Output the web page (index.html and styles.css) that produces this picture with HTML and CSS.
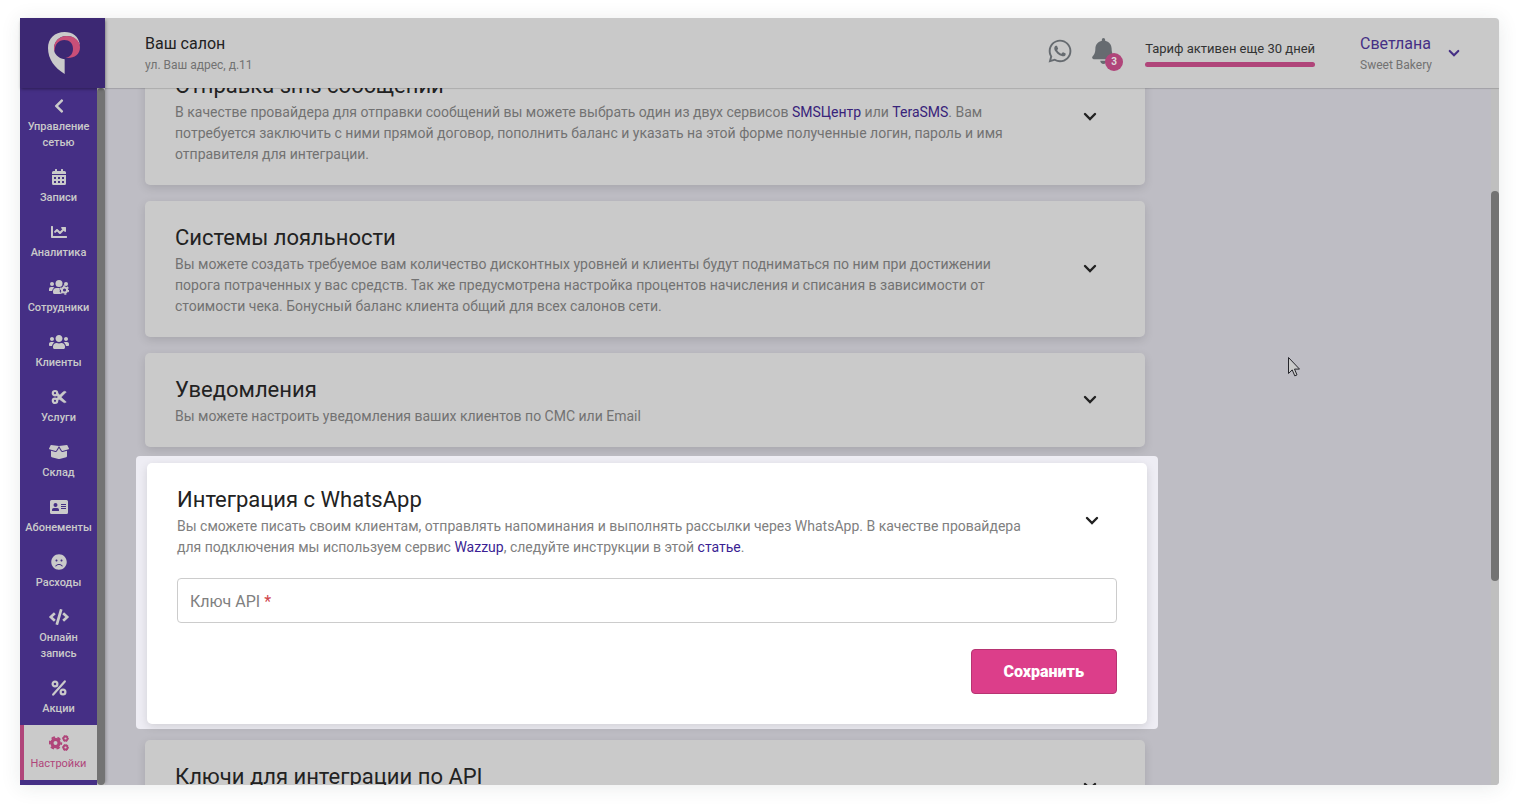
FILE: index.html
```html
<!DOCTYPE html>
<html lang="ru">
  <head>
    <title>Настройки</title>
    <meta charset="utf-8">
    <meta name="viewport" content="width=device-width, initial-scale=1">
    <link rel="stylesheet" href="styles.css">
  </head>
  <body>
    <svg class="sprite" aria-hidden="true">
      <symbol id="chevron-down" viewBox="0 0 14 10">
        <path d="M2 2l5 5 5-5" fill="none" stroke="currentColor" stroke-width="2.400" stroke-linecap="round" />
      </symbol>
    </svg>

    <div class="app">
      <aside class="sidebar">
        <a class="logo" href="#" aria-label="Главная">
          <svg width="32" height="42" viewBox="0 0 96 126">
            <path fill="#cacaca" d="M50 126C20 108 0 82 0 48 0 20 20 0 50 0c24 0 42 12 46 40-8-18-22-28-40-28-24 0-38 18-38 38 0 16 12 28 32 32z" />
            <path fill="#c94f78" d="M18 54c-2-26 16-42 38-42 24 0 40 14 40 34 0 22-18 34-43 32 15-4 22-14 22-28 0-16-11-26-26-26-17 0-29 12-29 34z" />
          </svg>
        </a>
        <div class="menu">
          <nav class="nav">
            <a class="nav-item" href="#">
              <svg width="10" height="16" viewBox="0 0 320 512"><path d="M34.52 239.03L228.87 44.69c9.37-9.37 24.57-9.37 33.94 0l22.67 22.67c9.36 9.36 9.37 24.52.04 33.9L131.49 256l154.02 154.75c9.34 9.38 9.32 24.54-.04 33.9l-22.67 22.67c-9.37 9.37-24.57 9.37-33.94 0L34.52 272.97c-9.37-9.37-9.37-24.57 0-33.94z" /></svg>
              Управление сетью
            </a>
            <a class="nav-item" href="#">
              <svg width="14" height="16" viewBox="0 0 14 16"><path fill-rule="evenodd" d="M1.500 2H3V.5a.5.5 0 0 1 .5-.5h1a.5.5 0 0 1 .5.5V2h4V.5a.5.5 0 0 1 .5-.5h1a.5.5 0 0 1 .5.5V2h1.500A1.500 1.500 0 0 1 14 3.500V5H0V3.500A1.500 1.500 0 0 1 1.500 2zM0 6h14v8.500a1.500 1.500 0 0 1-1.500 1.500h-11A1.500 1.500 0 0 1 0 14.500zM2 8v2h2V8zm4 0v2h2V8zm4 0v2h2V8zM2 12v2h2v-2zm4 0v2h2v-2zm4 0v2h2v-2z" /></svg>
              Записи
            </a>
            <a class="nav-item" href="#">
              <svg width="16" height="16" viewBox="0 0 512 512"><path d="M496 384H64V80c0-8.84-7.16-16-16-16H16C7.16 64 0 71.16 0 80v336c0 17.67 14.33 32 32 32h464c8.84 0 16-7.16 16-16v-32c0-8.840-7.160-16-16-16zM464 96H345.940c-21.380 0-32.090 25.850-16.970 40.970l32.400 32.400L288 242.750l-73.370-73.370c-12.500-12.500-32.760-12.500-45.250 0l-68.690 68.690c-6.250 6.250-6.250 16.380 0 22.630l22.620 22.620c6.250 6.250 16.380 6.250 22.630 0L192 237.250l73.370 73.370c12.500 12.500 32.760 12.500 45.250 0l96-96 32.400 32.400c15.120 15.120 40.970 4.410 40.970-16.970V112c.01-8.840-7.150-16-15.990-16z" /></svg>
              Аналитика
            </a>
            <a class="nav-item" href="#">
              <svg width="20" height="16" viewBox="0 0 20 16">
                <circle cx="3" cy="5" r="2" /><circle cx="10" cy="4.500" r="3.500" /><circle cx="17" cy="5" r="2" />
                <path d="M0 12v-2a2 2 0 0 1 2-2h2q.8 0 1.400.6Q3.500 9.800 3.100 12zM4 13.500v-1A3.500 3.500 0 0 1 7.500 9h3.400q-.9 1 .1 2.200-1 .9.2 2.400.3 1 1.300 1.400H5.500A1.500 1.500 0 0 1 4 13.500z" />
                <circle cx="15.500" cy="11" r="2.600" fill="none" stroke="currentColor" stroke-width="2" />
                <circle cx="15.500" cy="11" r="4" fill="none" stroke="currentColor" stroke-width="1.400" stroke-dasharray="2.100 2.089" />
              </svg>
              Сотрудники
            </a>
            <a class="nav-item" href="#">
              <svg width="20" height="16" viewBox="0 0 640 512"><path d="M96 224c35.300 0 64-28.700 64-64s-28.700-64-64-64-64 28.700-64 64 28.700 64 64 64zm448 0c35.300 0 64-28.700 64-64s-28.700-64-64-64-64 28.700-64 64 28.700 64 64 64zm32 32h-64c-17.600 0-33.500 7.100-45.100 18.600 40.300 22.100 68.900 62 75.100 109.400h66c17.700 0 32-14.300 32-32v-32c0-35.300-28.700-64-64-64zm-256 0c61.900 0 112-50.100 112-112S381.900 32 320 32 208 82.100 208 144s50.100 112 112 112zm76.800 32h-8.300c-20.800 10-43.900 16-68.500 16s-47.600-6-68.500-16h-8.300C179.600 288 128 339.600 128 403.200V432c0 26.500 21.500 48 48 48h288c26.500 0 48-21.500 48-48v-28.800c0-63.600-51.600-115.200-115.200-115.200zm-223.700-13.400C161.500 263.100 145.600 256 128 256H64c-35.300 0-64 28.700-64 64v32c0 17.700 14.300 32 32 32h65.900c6.300-47.400 34.900-87.300 75.200-109.400z" /></svg>
              Клиенты
            </a>
            <a class="nav-item" href="#">
              <svg width="16" height="16" viewBox="0 0 16 16">
                <g fill="none" stroke="currentColor" stroke-width="2.200"><circle cx="4" cy="4.200" r="2.200" /><circle cx="4" cy="11.800" r="2.200" /></g>
                <path d="M5 5.500l2.200-.9 1.600 1.300L12 3q1.600-1.500 3.300 0L6.800 11.600 4.800 10.500 7 8zM9.600 7.800l5.700 5.200q-1.700 1.500-3.300 0L7.600 9.800z" stroke="currentColor" stroke-width=".5" />
              </svg>
              Услуги
            </a>
            <a class="nav-item" href="#">
              <svg width="20" height="16" viewBox="0 0 640 512"><path d="M425.700 256c-16.900 0-32.800-9-41.400-23.400L320 126l-64.200 106.600c-8.700 14.500-24.600 23.500-41.500 23.500-4.500 0-9-.6-13.300-1.900L64 215v178c0 14.700 10 27.500 24.200 31l216.200 54.100c10.200 2.500 20.900 2.500 31 0L551.800 424c14.200-3.600 24.200-16.400 24.200-31V215l-137 39.100c-4.300 1.300-8.800 1.900-13.300 1.900zm212.600-112.200L586.800 41c-3.100-6.200-9.800-9.800-16.700-8.900L320 64l91.700 152.100c3.800 6.300 11.400 9.300 18.500 7.300l197.900-56.500c9.900-2.900 14.700-13.900 10.200-23.100zM53.200 41L1.700 143.800c-4.600 9.200.3 20.200 10.100 23l197.900 56.500c7.100 2 14.700-1 18.500-7.300L320 64 69.800 32.100c-6.900-.8-13.500 2.700-16.600 8.900z" /></svg>
              Склад
            </a>
            <a class="nav-item" href="#">
              <svg width="18" height="16" viewBox="0 0 18 16"><path fill-rule="evenodd" d="M1.500 1h15A1.500 1.500 0 0 1 18 2.500v11a1.500 1.500 0 0 1-1.500 1.500h-15A1.500 1.500 0 0 1 0 13.500v-11A1.500 1.500 0 0 1 1.500 1zM5.500 4a2 2 0 1 0 0 4 2 2 0 0 0 0-4zM2 11.500q0 .5.500.5h6q.5 0 .5-.5v-.7Q9 9 7.200 9H3.800Q2 9 2 10.800zM11 5v1h5V5zm0 2v1h5V7zm0 2v1h5V9z" /></svg>
              Абонементы
            </a>
            <a class="nav-item" href="#">
              <svg width="16" height="16" viewBox="0 0 496 512"><path d="M248 8C111 8 0 119 0 256s111 248 248 248 248-111 248-248S385 8 248 8zm80 168c17.700 0 32 14.300 32 32s-14.300 32-32 32-32-14.300-32-32 14.300-32 32-32zm-160 0c17.700 0 32 14.300 32 32s-14.300 32-32 32-32-14.300-32-32 14.300-32 32-32zm170.200 218.200C315.800 367.400 282.900 352 248 352s-67.800 15.400-90.200 42.200c-13.500 16.300-38.100-4.200-24.600-20.500C161.700 339.600 203.600 320 248 320s86.300 19.600 114.700 53.800c13.600 16.200-11 36.700-24.500 20.400z" /></svg>
              Расходы
            </a>
            <a class="nav-item" href="#">
              <svg width="20" height="16" viewBox="0 0 640 512"><path d="M278.900 511.500l-61-17.700c-6.400-1.800-10-8.500-8.200-14.900L346.200 8.700c1.800-6.400 8.500-10 14.900-8.200l61 17.700c6.400 1.800 10 8.500 8.200 14.900L293.800 503.300c-1.900 6.400-8.500 10.100-14.900 8.200zm-114-112.200l43.500-46.400c4.600-4.900 4.300-12.700-.8-17.200L117 256l90.600-79.700c5.100-4.500 5.500-12.300.8-17.200l-43.500-46.400c-4.500-4.800-12.100-5.100-17-.5L3.800 247.200c-5.100 4.700-5.100 12.800 0 17.500l144.100 135.100c4.900 4.600 12.500 4.400 17-.5zm327.200.6l144.100-135.100c5.100-4.700 5.100-12.800 0-17.500L492.100 112.100c-4.800-4.500-12.400-4.300-17 .5L431.600 159c-4.600 4.900-4.300 12.700.8 17.200L523 256l-90.600 79.700c-5.100 4.500-5.500 12.300-.8 17.200l43.500 46.400c4.500 4.900 12.100 5.100 17 .6z" /></svg>
              Онлайн запись
            </a>
            <a class="nav-item" href="#">
              <svg width="16" height="16" viewBox="0 0 16 16"><g fill="none" stroke="currentColor" stroke-width="2.200"><circle cx="4" cy="4" r="2.400" /><circle cx="12" cy="12" r="2.400" /><path d="M13.800 1.400L2.200 14.600" stroke-linecap="round" /></g></svg>
              Акции
            </a>
            <a class="nav-item active" href="#">
              <svg width="20" height="16" viewBox="0 0 20 16">
                <g fill="none" stroke="currentColor">
                  <circle cx="6.500" cy="8" r="3.600" stroke-width="3.200" />
                  <circle cx="6.500" cy="8" r="5.700" stroke-width="2" stroke-dasharray="3.400 2.569" stroke-dashoffset="1.700" />
                  <circle cx="16.500" cy="3.500" r="2" stroke-width="1.800" />
                  <circle cx="16.500" cy="3.500" r="3" stroke-width="1" stroke-dasharray="2 1.142" stroke-dashoffset="1" />
                  <circle cx="16.500" cy="12.500" r="2" stroke-width="1.800" />
                  <circle cx="16.500" cy="12.500" r="3" stroke-width="1" stroke-dasharray="2 1.142" stroke-dashoffset="1" />
                </g>
              </svg>
              Настройки
            </a>
          </nav>
          <div class="scrollbar"><div class="thumb thumb-menu"></div></div>
        </div>
      </aside>

      <div class="main">
        <header class="topbar">
          <div class="salon">
            <div class="name">Ваш салон</div>
            <div class="sub">ул. Ваш адрес, д.11</div>
          </div>
          <a class="whatsapp" href="#" aria-label="WhatsApp">
            <svg width="24" height="26" viewBox="0 0 448 512"><path d="M380.900 97.100C339 55.100 283.200 32 223.900 32c-122.400 0-222 99.600-222 222 0 39.100 10.200 77.300 29.600 111L0 480l117.700-30.900c32.400 17.700 68.900 27 106.100 27h.1c122.300 0 224.100-99.600 224.100-222 0-59.300-25.200-115-67.100-157zm-157 341.600c-33.200 0-65.700-8.900-94-25.700l-6.700-4-69.800 18.300L72 359.200l-4.400-7c-18.500-29.400-28.200-63.300-28.200-98.200 0-101.700 82.800-184.500 184.600-184.500 49.300 0 95.600 19.200 130.400 54.100 34.800 34.900 56.200 81.200 56.100 130.500 0 101.800-84.900 184.600-186.600 184.600zm101.200-138.200c-5.500-2.800-32.800-16.200-37.900-18-5.100-1.900-8.800-2.800-12.500 2.800-3.700 5.600-14.300 18-17.600 21.800-3.200 3.700-6.500 4.200-12 1.400-32.600-16.300-54-29.100-75.500-66-5.700-9.800 5.700-9.100 16.300-30.300 1.800-3.700.9-6.900-.5-9.700-1.400-2.800-12.500-30.100-17.100-41.200-4.500-10.800-9.100-9.300-12.500-9.500-3.200-.2-6.900-.2-10.600-.2-3.700 0-9.700 1.400-14.800 6.900-5.100 5.600-19.400 19-19.400 46.300 0 27.300 19.900 53.700 22.600 57.400 2.800 3.700 39.100 59.700 94.800 83.800 35.200 15.200 49 16.500 66.600 13.900 10.700-1.600 32.800-13.400 37.400-26.400 4.600-13 4.600-24.100 3.200-26.400-1.300-2.500-5-3.900-10.500-6.600z" /></svg>
          </a>
          <button class="bell" type="button" aria-label="Уведомления">
            <svg width="23" height="26" viewBox="0 0 448 512"><path d="M224 512c35.320 0 63.970-28.650 63.970-64H160.030c0 35.350 28.650 64 63.970 64zm215.390-149.710c-19.320-20.760-55.470-51.990-55.470-154.290 0-77.700-54.480-139.900-127.940-155.160V32c0-17.670-14.320-32-31.980-32s-31.980 14.330-31.980 32v20.840C118.560 68.100 64.080 130.300 64.080 208c0 102.300-36.150 133.530-55.470 154.290-6 6.450-8.660 14.160-8.610 21.710.11 16.400 12.980 32 32.100 32h383.800c19.120 0 32-15.600 32.100-32 .05-7.550-2.610-15.270-8.610-21.710z" /></svg>
            <span class="badge">3</span>
          </button>
          <div class="tariff">
            Тариф активен еще 30 дней
            <div class="tariff-bar"></div>
          </div>
          <button class="user" type="button">
            <span>
              <span class="name">Светлана</span>
              <span class="sub">Sweet Bakery</span>
            </span>
            <svg width="12" height="9"><use href="#chevron-down" /></svg>
          </button>
        </header>

        <div class="content">
          <main class="cards">
            <section class="card">
              <div class="card-head">
                <div class="card-text">
                  <h2>Отправка sms сообщений</h2>
                  <p>В качестве провайдера для отправки сообщений вы можете выбрать один из двух сервисов <a href="#">SMSЦентр</a> или <a href="#">TeraSMS</a>. Вам потребуется заключить с ними прямой договор, пополнить баланс и указать на этой форме полученные логин, пароль и имя отправителя для интеграции.</p>
                </div>
                <button class="toggle" type="button" aria-label="Развернуть"><svg width="14" height="10"><use href="#chevron-down" /></svg></button>
              </div>
            </section>

            <section class="card">
              <div class="card-head">
                <div class="card-text">
                  <h2>Системы лояльности</h2>
                  <p>Вы можете создать требуемое вам количество дисконтных уровней и клиенты будут подниматься по ним при достижении порога потраченных у вас средств. Так же предусмотрена настройка процентов начисления и списания в зависимости от стоимости чека. Бонусный баланс клиента общий для всех салонов сети.</p>
                </div>
                <button class="toggle" type="button" aria-label="Развернуть"><svg width="14" height="10"><use href="#chevron-down" /></svg></button>
              </div>
            </section>

            <section class="card">
              <div class="card-head">
                <div class="card-text">
                  <h2>Уведомления</h2>
                  <p>Вы можете настроить уведомления ваших клиентов по СМС или Email</p>
                </div>
                <button class="toggle" type="button" aria-label="Развернуть"><svg width="14" height="10"><use href="#chevron-down" /></svg></button>
              </div>
            </section>

            <div class="spotlight">
              <section class="card">
                <div class="card-head">
                  <div class="card-text">
                    <h2>Интеграция с WhatsApp</h2>
                    <p>Вы сможете писать своим клиентам, отправлять напоминания и выполнять рассылки через WhatsApp. В качестве провайдера для подключения мы используем сервис <a href="#">Wazzup</a>, следуйте инструкции в этой <a href="#">статье</a>.</p>
                  </div>
                  <button class="toggle" type="button" aria-label="Свернуть"><svg width="14" height="10"><use href="#chevron-down" /></svg></button>
                </div>
                <form class="card-form">
                  <div class="field">
                    <input id="api-key" type="text" required>
                    <label for="api-key">Ключ API <span>*</span></label>
                  </div>
                  <button class="save" type="submit">Сохранить</button>
                </form>
              </section>
            </div>

            <section class="card">
              <div class="card-head">
                <div class="card-text">
                  <h2>Ключи для интеграции по API</h2>
                  <p>&nbsp;</p>
                </div>
                <button class="toggle" type="button" aria-label="Развернуть"><svg width="14" height="10"><use href="#chevron-down" /></svg></button>
              </div>
            </section>
          </main>
          <div class="scrollbar"><div class="thumb thumb-page"></div></div>
        </div>
      </div>
    </div>

    <svg class="cursor" width="12" height="20" viewBox="0 0 12 20" aria-hidden="true">
      <path d="M.5.500v16l3.700-3.600 2.600 6 2.200-1-2.500-5.800h5z" fill="#cacaca" stroke="#25252b" />
    </svg>
  </body>
</html>
```
FILE: styles.css
```css
* { box-sizing: border-box; }

body {
  margin: 0;
  padding: 18px 20px 22px;
  height: 100vh;
  overflow: hidden;
  background: #fff;
  color: #222;
  font-family: Roboto, "Liberation Sans", sans-serif;
  font-size: 14px;
}
a { text-decoration: none; }
button {
  padding: 0;
  border: 0;
  background: none;
  color: #222;
  font-family: inherit;
  cursor: pointer;
}
svg { display: block; fill: currentColor; }
.sprite { position: absolute; width: 0; height: 0; }

.app {
  display: flex;
  height: 100%;
  border-radius: 0 4px 4px 0;
  box-shadow: 0 2px 20px rgba(40, 60, 60, .1);
}

/* Sidebar */
.sidebar {
  display: flex;
  flex-direction: column;
  width: 85px;
  flex-shrink: 0;
  z-index: 2;
  box-shadow: 3px 0 3px -2px rgba(0, 0, 0, .25);
}
.logo {
  display: flex;
  align-items: center;
  justify-content: center;
  height: 70px;
  flex-shrink: 0;
  padding-left: 3px;
  background: #3c2873;
  box-shadow: 0 2px 3px -1px rgba(0, 0, 0, .4);
  z-index: 1;
}
.menu {
  display: flex;
  flex: 1;
  min-height: 0;
}
.nav {
  flex: 1;
  overflow: hidden;
  background: #452f85;
}
.nav-item {
  display: flex;
  flex-direction: column;
  align-items: center;
  gap: 5px;
  padding: 10px 4px 8px;
  color: #cacaca;
  font-size: 11px;
  font-weight: 500;
  line-height: 16px;
  text-align: center;
}
.nav-item.active {
  background: #cacaca;
  box-shadow: inset 4px 0 #b0457a;
  color: #b0457a;
  font-weight: 400;
}

.scrollbar {
  width: 8px;
  flex-shrink: 0;
  background: #bfbfbf;
}
.thumb {
  border-radius: 4px;
  background: #737373;
}
.thumb-menu { height: 100%; }
.thumb-page {
  height: 56%;
  margin-top: 103px;
}

/* Header */
.main {
  display: flex;
  flex: 1;
  flex-direction: column;
  min-width: 0;
}
.topbar {
  display: flex;
  align-items: center;
  height: 70px;
  flex-shrink: 0;
  padding: 0 39px 0 40px;
  border-radius: 0 4px 0 0;
  background: #c9c9c9;
  box-shadow: 0 1px 1px rgba(0, 0, 0, .15);
  z-index: 1;
}
.salon { flex: 1; }
.name {
  display: block;
  font-size: 16px;
  line-height: 24px;
}
.sub {
  display: block;
  color: #727272;
  font-size: 12px;
  line-height: 18px;
}
.whatsapp,
.bell {
  padding-bottom: 4px;
  color: #666b70;
}
.whatsapp { margin-right: 20px; }
.bell {
  position: relative;
  margin-right: 30px;
}
.badge {
  position: absolute;
  top: 15px;
  left: 13px;
  width: 18px;
  height: 18px;
  border-radius: 50%;
  background: #b0457a;
  color: #ddd;
  font-size: 10px;
  font-weight: 700;
  line-height: 18px;
}
.tariff {
  margin-right: 45px;
  color: #333;
  font-size: 13px;
  line-height: 20px;
}
.tariff-bar {
  height: 5px;
  margin-top: 3px;
  border-radius: 3px;
  background: #b0457a;
}
.user {
  display: flex;
  align-items: center;
  gap: 16px;
  color: #452f85;
  text-align: left;
}

/* Cards */
.content {
  display: flex;
  flex: 1;
  justify-content: space-between;
  min-height: 0;
  overflow: hidden;
  border-radius: 0 0 4px 0;
  background: #bebdc4;
}
.cards {
  width: 1000px;
  margin: -39px 40px 0;
}
.card {
  margin-bottom: 16px;
  border-radius: 5px;
  background: #cacaca;
  box-shadow: 0 3px 10px rgba(0, 0, 0, .12);
}
.card-head {
  display: flex;
  align-items: center;
  justify-content: space-between;
  padding: 21px 48px 20px 30px;
}
.card-text { max-width: 850px; }
.toggle { padding-bottom: 1px; }
.card h2 {
  margin: 0 0 1px;
  font-size: 22px;
  font-weight: 400;
  line-height: 31px;
}
.card p {
  margin: 0;
  color: #727272;
  line-height: 21px;
}
.card a { color: #38237a; }

.spotlight {
  margin: -7px -13px 11px -9px;
  padding: 7px 11px 5px;
  border-radius: 4px;
  background: #eeedf4;
}
.spotlight .card {
  margin-bottom: 0;
  background: #fff;
}
.spotlight p { color: #808080; }
.spotlight a { color: #3b1f94; }

.card-form {
  display: flex;
  flex-direction: column;
  align-items: flex-end;
  gap: 26px;
  padding: 0 30px 30px;
}
.field {
  position: relative;
  width: 100%;
}
.field input {
  display: block;
  width: 100%;
  height: 45px;
  padding: 0 12px;
  border: 1px solid #ccc;
  border-radius: 4px;
  background: #fff;
  font: inherit;
  font-size: 16px;
}
/* the label sits inside the empty box */
.field label {
  position: absolute;
  top: 0;
  left: 13px;
  color: #808080;
  font-size: 16px;
  line-height: 48px;
  pointer-events: none;
}
.field input:valid + label { display: none; }
.field label span { color: #d0454c; }
.save {
  height: 45px;
  padding: 0 32px;
  border: 1px solid #b73472;
  border-radius: 4px;
  background: #dc3e8a;
  color: #fff;
  font-size: 16px;
  font-weight: 900;
}

.cursor {
  position: absolute;
  top: 357px;
  left: 1288px;
}
```
